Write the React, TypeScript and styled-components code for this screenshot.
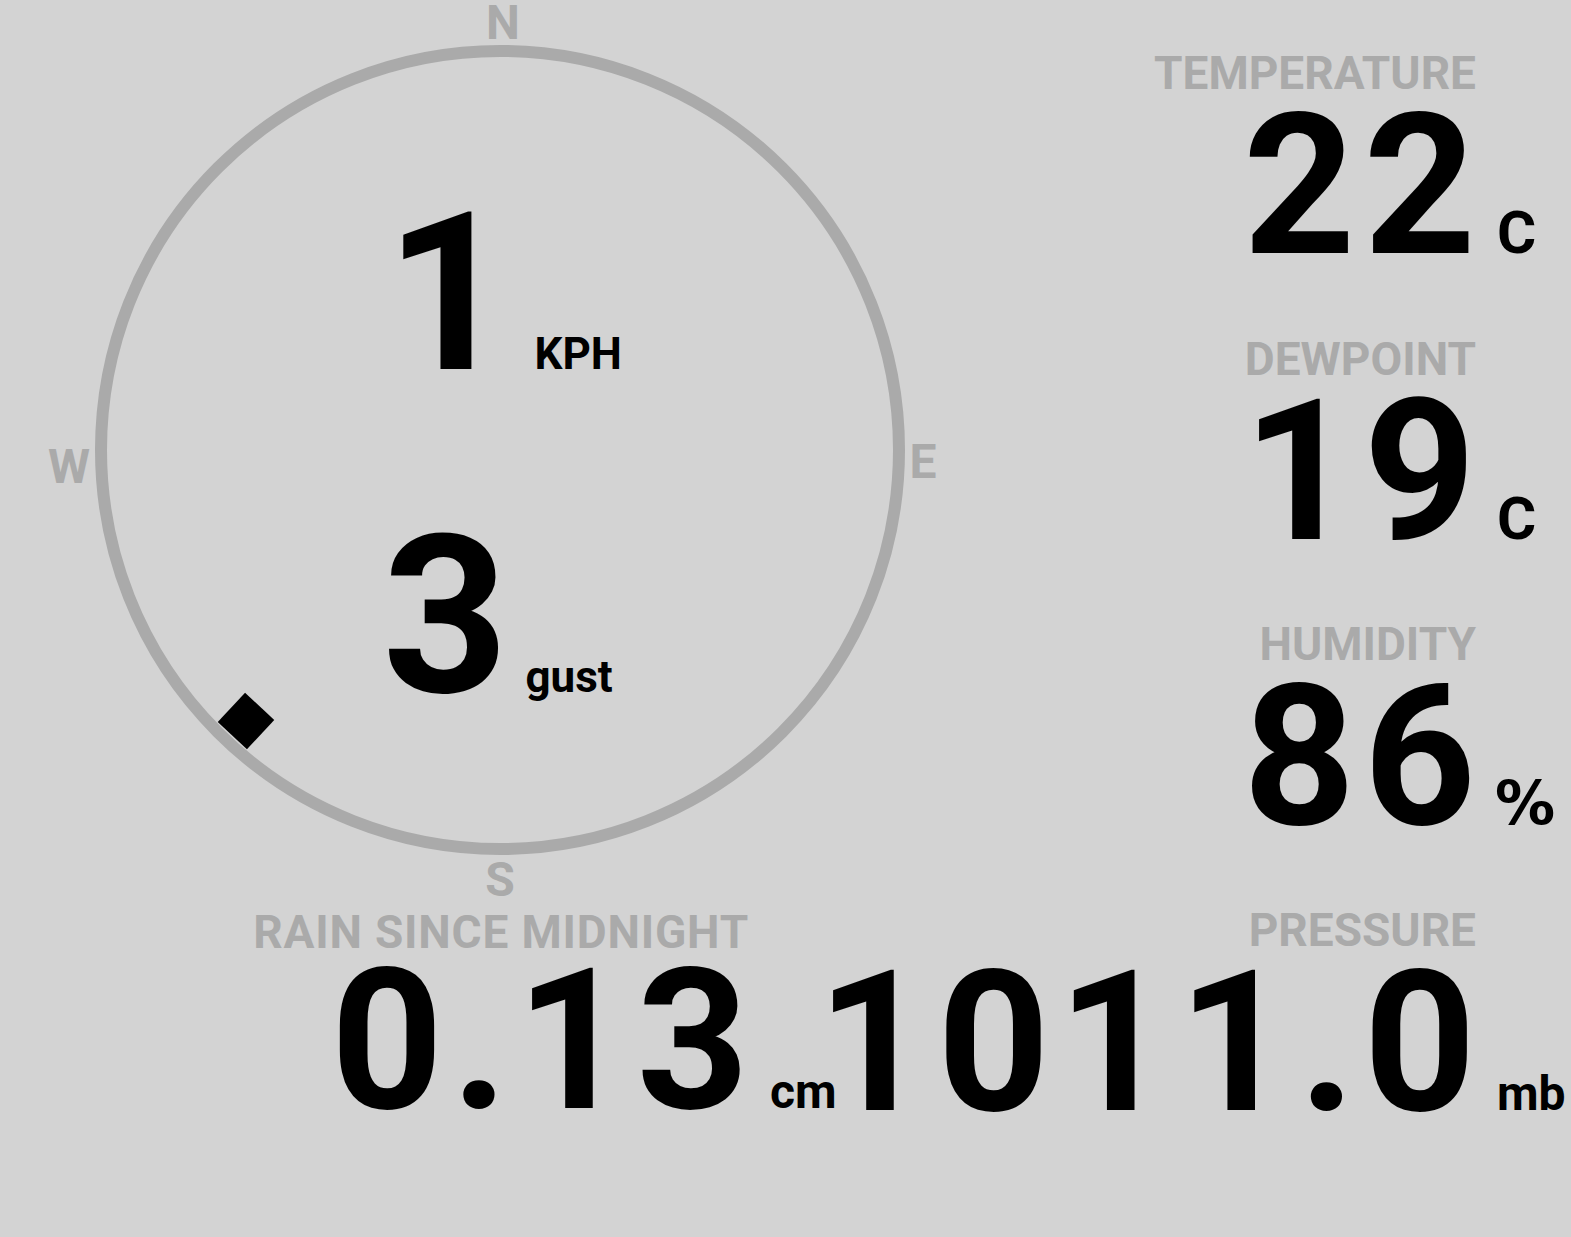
import React from "react";
import styled, { createGlobalStyle } from "styled-components";

const GlobalStyle = createGlobalStyle`
  html, body {
    margin: 0;
    padding: 0;
    background: #d3d3d3;
  }
  body {
    font-family: Roboto, "Liberation Sans", sans-serif;
    color: #000;
  }
`;

const Page = styled.main`
  display: grid;
  grid-template-columns: 836px minmax(0, 1fr);
  width: 1571px;
  height: 1237px;
  box-sizing: border-box;
  padding-right: 8px;
  background: #d3d3d3;
  overflow: hidden;
`;

const LeftColumn = styled.section`
  display: flex;
  flex-direction: column;
  align-items: flex-start;
  min-width: 0;
`;

const CompassArea = styled.div`
  padding: 45px 0 0 95px;
`;

const Dial = styled.div`
  position: relative;
  box-sizing: border-box;
  width: 810px;
  height: 810px;
  border: 12px solid #aaa;
  border-radius: 50%;
  display: flex;
  flex-direction: column;
  align-items: center;
  padding-top: 149px;
  gap: 147px;
`;

const WindRow = styled.div<{ $gap: number; $shift: number }>`
  display: flex;
  align-items: baseline;
  gap: ${(p) => p.$gap}px;
  margin-left: ${(p) => p.$shift}px;
`;

const WindNumber = styled.span`
  font-weight: 700;
  font-size: 220px;
  line-height: 176px;
`;

const WindUnit = styled.span`
  font-weight: 700;
  font-size: 44px;
  line-height: 1;
`;

const CompassLetter = styled.span<{ $x: number; $y: number }>`
  position: absolute;
  left: ${(p) => p.$x}px;
  top: ${(p) => p.$y}px;
  transform: translateX(-50%);
  font-weight: 700;
  font-size: 48px;
  line-height: 48px;
  color: #aaa;
`;

const Pointer = styled.div`
  position: absolute;
  width: 40px;
  height: 40px;
  background: #000;
`;

const RightColumn = styled.section`
  display: flex;
  flex-direction: column;
  align-items: flex-end;
  min-width: 0;
  padding-top: 50px;
  gap: 69.5px;
`;

const StatBlock = styled.div<{ $labelGap: number; $offset?: number }>`
  display: flex;
  flex-direction: column;
  align-items: flex-end;
  gap: ${(p) => p.$labelGap}px;
  margin-top: ${(p) => p.$offset ?? 0}px;
  align-self: flex-end;
`;

const StatLabel = styled.div<{ $tracking: number }>`
  font-weight: 700;
  font-size: 46px;
  line-height: 46px;
  letter-spacing: ${(p) => p.$tracking}px;
  color: #aaa;
  margin-right: 87px;
  white-space: nowrap;
`;

const ValueRow = styled.div`
  display: flex;
  align-items: baseline;
`;

const BigNumber = styled.span`
  font-weight: 700;
  font-size: 196px;
  line-height: 160px;
  letter-spacing: 8px;
  margin-right: -8px;
  white-space: nowrap;
`;

const UnitBox = styled.span<{ $size: number; $wide?: boolean }>`
  box-sizing: border-box;
  width: 87px;
  padding-left: ${(p) => (p.$wide ? 19 : 21)}px;
  font-family: ${(p) =>
    p.$wide ? '"DejaVu Sans", Roboto, sans-serif' : 'Roboto, "Liberation Sans", sans-serif'};
  font-weight: 700;
  font-size: ${(p) => p.$size}px;
  line-height: 1;
  white-space: nowrap;
`;

type StatProps = {
  label: string;
  value: string;
  unit: string;
  unitSize: number;
  wideUnit?: boolean;
  labelGap?: number;
  tracking?: number;
  offset?: number;
};

function Stat({
  label,
  value,
  unit,
  unitSize,
  wideUnit,
  labelGap = 10,
  tracking = 0,
  offset,
}: StatProps) {
  return (
    <StatBlock $labelGap={labelGap} $offset={offset}>
      <StatLabel $tracking={tracking}>{label}</StatLabel>
      <ValueRow>
        <BigNumber>{value}</BigNumber>
        <UnitBox $size={unitSize} $wide={wideUnit}>
          {unit}
        </UnitBox>
      </ValueRow>
    </StatBlock>
  );
}

const DIAL_CENTER = 393;
const POINTER_RADIUS = 371.4;
const windDirection = 223.1;

function Compass() {
  const rad = (windDirection * Math.PI) / 180;
  const cx = DIAL_CENTER + POINTER_RADIUS * Math.sin(rad);
  const cy = DIAL_CENTER - POINTER_RADIUS * Math.cos(rad);
  return (
    <CompassArea>
      <Dial>
        <CompassLetter $x={396} $y={-58}>N</CompassLetter>
        <CompassLetter $x={-38} $y={386}>W</CompassLetter>
        <CompassLetter $x={816} $y={381}>E</CompassLetter>
        <CompassLetter $x={393} $y={799}>S</CompassLetter>
        <Pointer
          style={{
            left: cx - 20,
            top: cy - 20,
            transform: `rotate(${windDirection}deg)`,
          }}
        />
        <WindRow $gap={23} $shift={7}>
          <WindNumber>1</WindNumber>
          <WindUnit>KPH</WindUnit>
        </WindRow>
        <WindRow $gap={17} $shift={-5}>
          <WindNumber>3</WindNumber>
          <WindUnit>gust</WindUnit>
        </WindRow>
      </Dial>
    </CompassArea>
  );
}

export default function App() {
  return (
    <>
      <GlobalStyle />
      <Page>
        <LeftColumn>
          <Compass />
          <Stat
            label="RAIN SINCE MIDNIGHT"
            value="0.13"
            unit="cm"
            unitSize={48}
            labelGap={6}
            tracking={0.8}
            offset={54}
          />
        </LeftColumn>
        <RightColumn>
          <Stat label="TEMPERATURE" value="22" unit="C" unitSize={60} />
          <Stat label="DEWPOINT" value="19" unit="C" unitSize={60} />
          <Stat label="HUMIDITY" value="86" unit="%" unitSize={60} wideUnit />
          <Stat label="PRESSURE" value="1011.0" unit="mb" unitSize={48} />
        </RightColumn>
      </Page>
    </>
  );
}
